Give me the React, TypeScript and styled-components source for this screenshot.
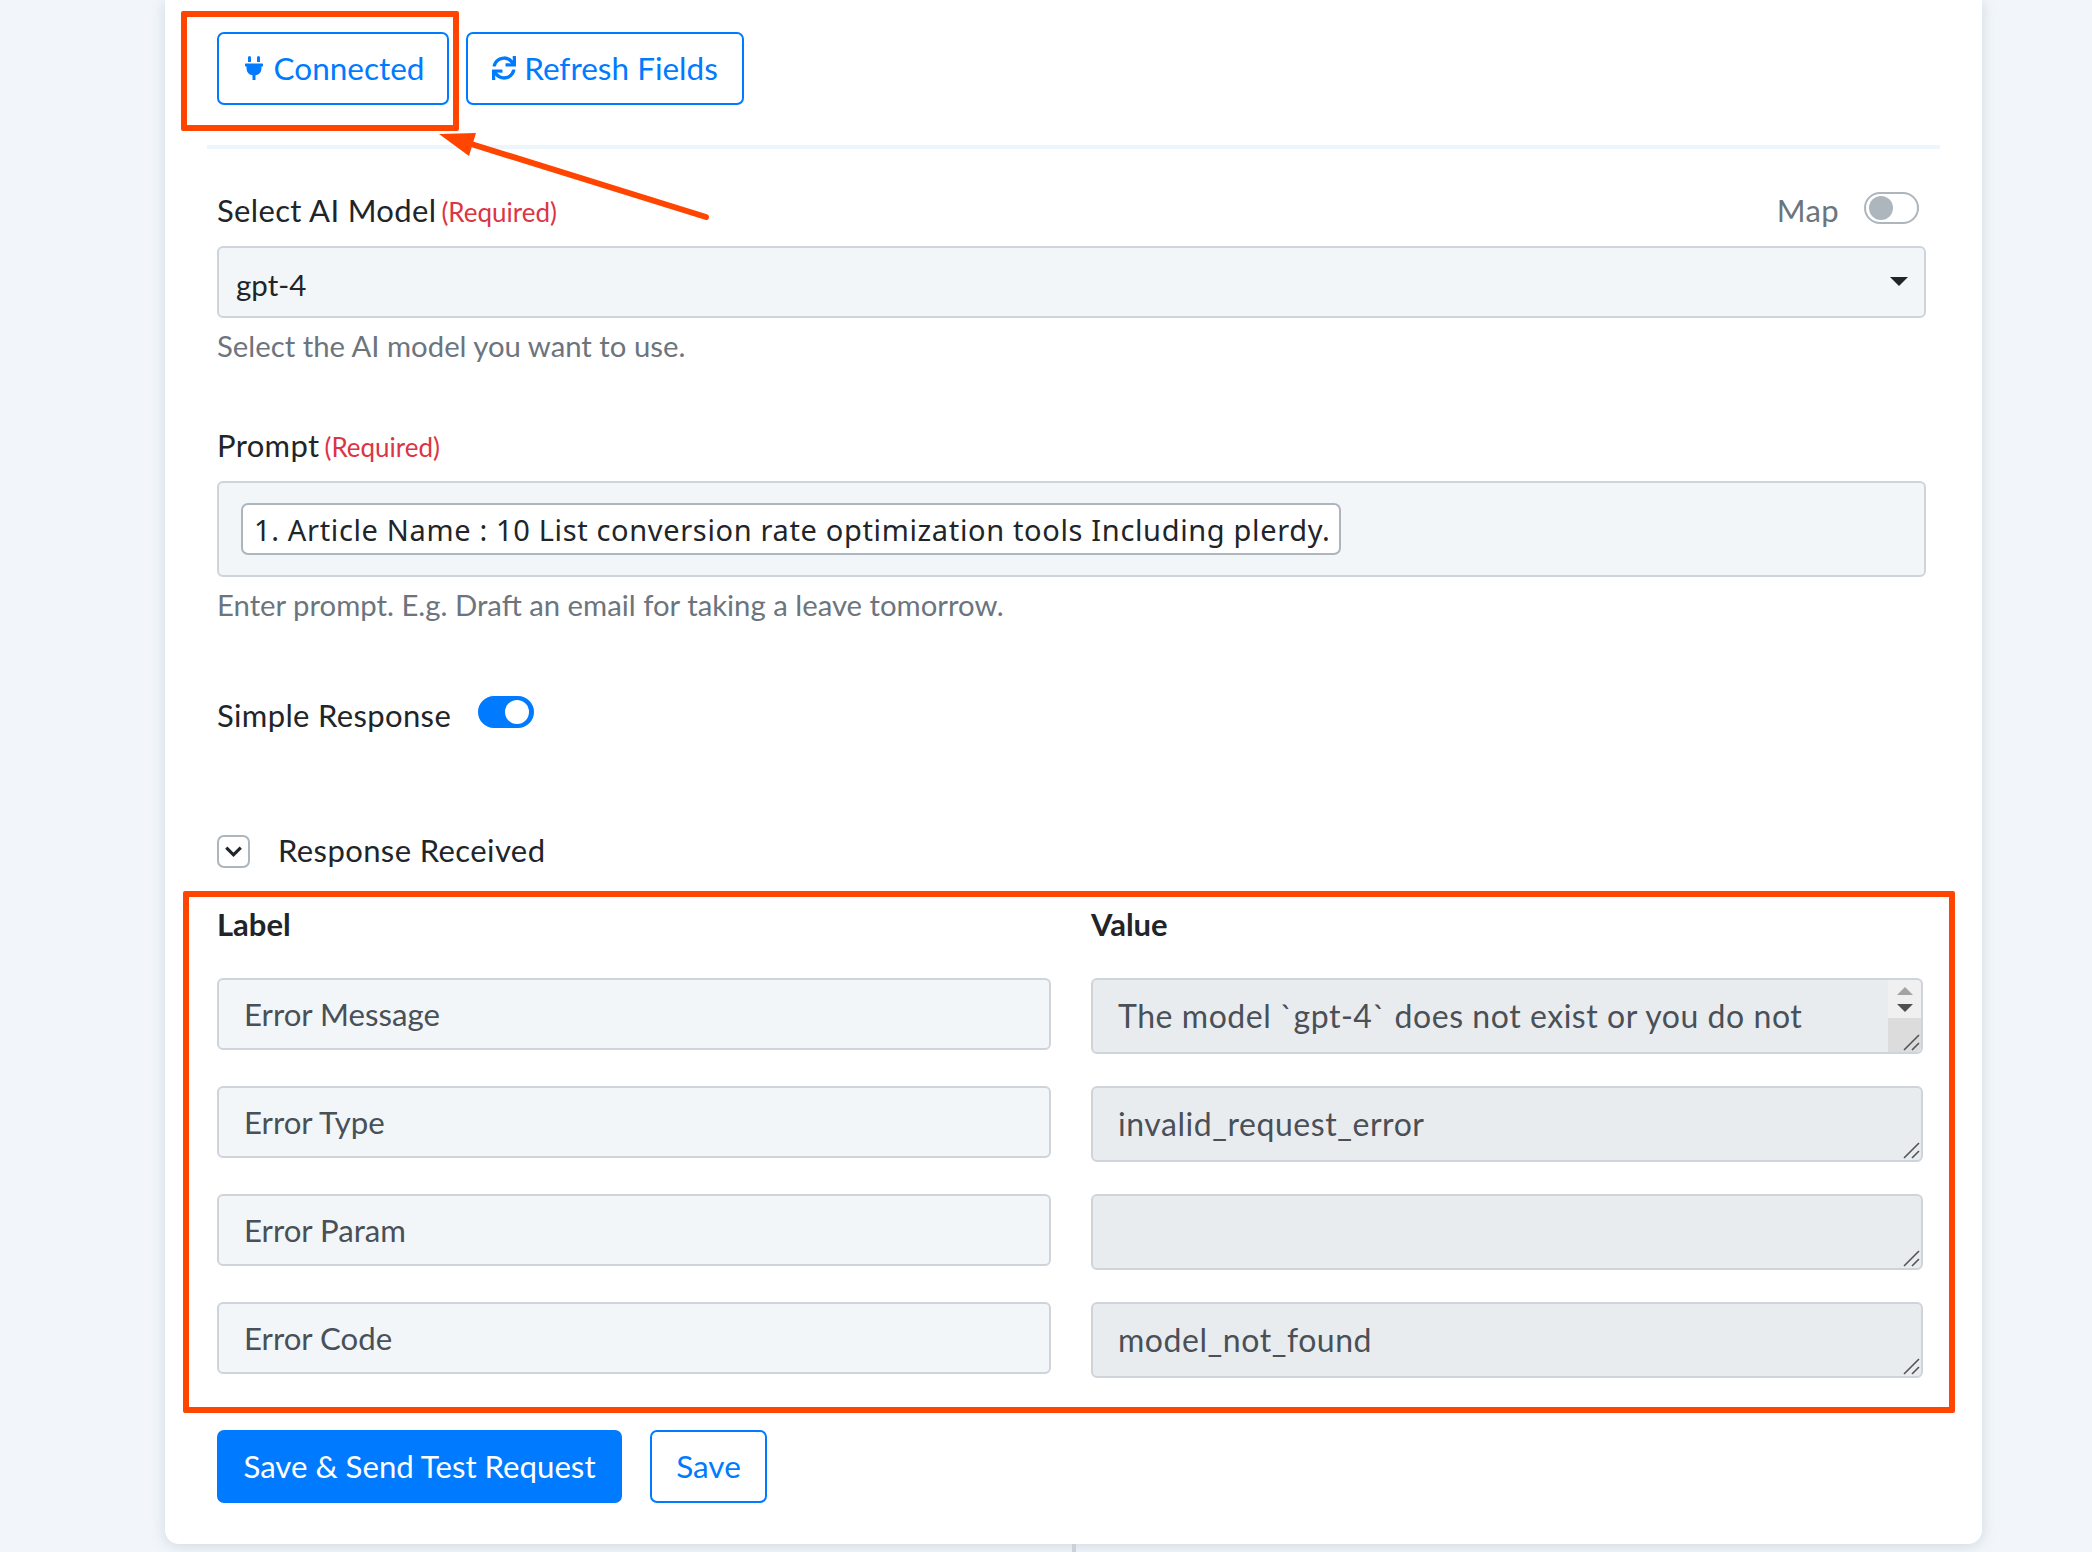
import React from 'react';
import styled, { createGlobalStyle } from 'styled-components';
import { FaPlug, FaSync } from 'react-icons/fa';

const GlobalStyle = createGlobalStyle`
  html, body {
    margin: 0;
    padding: 0;
    background: #f2f6fa;
    overflow: hidden;
  }
  * {
    box-sizing: border-box;
  }
`;

const Page = styled.div`
  position: relative;
  width: 2092px;
  height: 1552px;
  overflow: hidden;
  font-family: Lato, 'Open Sans', sans-serif;
  color: #212529;
`;

const Card = styled.main`
  margin-left: 165px;
  width: 1817px;
  height: 1544px;
  background: #fff;
  border-radius: 0 0 14px 14px;
  box-shadow: 0 2px 14px rgba(120, 140, 165, 0.28);
  padding: 32px 56px 0 52px;
`;

const Connector = styled.div`
  margin-left: 1072px;
  width: 4px;
  height: 8px;
  background: #cbd1d8;
`;

const ButtonRow = styled.div`
  display: flex;
  gap: 17px;
`;

const Button = styled.button<{ $solid?: boolean; $width: number }>`
  display: flex;
  align-items: center;
  justify-content: center;
  gap: 8px;
  width: ${(p) => p.$width}px;
  height: 73px;
  border: 2px solid #007bff;
  border-radius: 7px;
  background: ${(p) => (p.$solid ? '#007bff' : '#fff')};
  color: ${(p) => (p.$solid ? '#fff' : '#007bff')};
  font-family: inherit;
  font-size: ${(p) => (p.$solid ? 31.2 : 31.5)}px;
  padding: 0 0 2px;
`;

const Divider = styled.hr`
  margin: 40px -14px 0 -10px;
  height: 4px;
  border: 0;
  background: #edf6fd;
`;

const LabelRow = styled.div`
  display: flex;
  align-items: center;
  justify-content: space-between;
  height: 55px;
  padding-bottom: 17px;
  margin-top: 42px;
`;

const Label = styled.label`
  font-size: 31px;
  letter-spacing: 0.35px;
  color: #212529;
`;

const Required = styled.span`
  margin-left: 5px;
  font-size: 26px;
  letter-spacing: 0;
  color: #dc3545;
`;

const MapSwitch = styled.div`
  display: flex;
  align-items: center;
  gap: 25px;
  margin-right: 7px;
  font-size: 31px;
  letter-spacing: 0.4px;
  color: #6c757d;
  & > span {
    margin-top: -4px;
  }
`;

const Toggle = styled.span<{ $on?: boolean }>`
  display: flex;
  justify-content: ${(p) => (p.$on ? 'flex-end' : 'flex-start')};
  align-items: center;
  width: ${(p) => (p.$on ? 56 : 55)}px;
  height: 32px;
  padding: 0 3px;
  border-radius: 16px;
  border: 2px solid ${(p) => (p.$on ? '#007bff' : '#adb5bd')};
  background: ${(p) => (p.$on ? '#007bff' : '#fff')};
  &::after {
    content: '';
    width: 24px;
    height: 24px;
    border-radius: 50%;
    background: ${(p) => (p.$on ? '#fff' : '#adb5bd')};
  }
`;

const Select = styled.div`
  display: flex;
  align-items: center;
  justify-content: space-between;
  height: 72px;
  padding: 4px 16px 0 17px;
  background: #f2f6f9;
  border: 2px solid #ced4da;
  border-radius: 6px;
  font-size: 29.5px;
  color: #212529;
`;

const Caret = styled.span`
  width: 0;
  height: 0;
  margin-top: -5px;
  border-left: 9px solid transparent;
  border-right: 9px solid transparent;
  border-top: 9px solid #212529;
`;

const Help = styled.div`
  margin-top: 10px;
  font-size: 29.3px;
  line-height: 36px;
  color: #6c757d;
`;

const PromptLabel = styled.div`
  margin-top: 63px;
  height: 54px;
  padding-bottom: 18px;
  display: flex;
  align-items: center;
`;

const PromptBox = styled.div`
  display: flex;
  align-items: center;
  height: 96px;
  padding: 0 22px;
  background: #f2f6f9;
  border: 2px solid #ced4da;
  border-radius: 6px;
`;

const PromptTag = styled.span`
  display: flex;
  align-items: center;
  width: 1100px;
  height: 52px;
  padding-left: 11px;
  background: #fff;
  border: 2px solid #adb5bd;
  border-radius: 7px;
  font-family: 'Noto Sans', sans-serif;
  font-size: 29px;
  letter-spacing: 0.65px;
  white-space: nowrap;
  color: #212529;
`;

const SimpleRow = styled.div`
  display: flex;
  align-items: center;
  gap: 27px;
  margin-top: 70px;
  height: 44px;
  & > span {
    margin-top: -6px;
  }
`;

const CollapseRow = styled.div`
  display: flex;
  align-items: center;
  gap: 28px;
  margin-top: 97px;
  height: 32px;
  font-size: 31px;
  letter-spacing: 0.4px;
`;

const CollapseButton = styled.span`
  display: flex;
  align-items: center;
  justify-content: center;
  width: 33px;
  height: 33px;
  margin-top: 3px;
  border: 2px solid #adb5bd;
  border-radius: 7px;
  color: #212529;
`;

const Grid = styled.div`
  display: grid;
  grid-template-columns: 834px 832px;
  column-gap: 40px;
  margin-top: 38px;
`;

const HeadCell = styled.div`
  height: 74px;
  padding-top: 2px;
  font-size: 31px;
  font-weight: 700;
  line-height: 36px;
  color: #212529;
`;

const LabelInput = styled.div`
  display: flex;
  align-items: center;
  height: 72px;
  margin-bottom: 36px;
  padding: 0 25px;
  background: #f2f6f9;
  border: 2px solid #ced4da;
  border-radius: 6px;
  font-size: 31.2px;
  color: #495057;
`;

const ValueWrap = styled.div`
  position: relative;
  height: 76px;
  margin-bottom: 32px;
`;

const ValueArea = styled.textarea<{ $narrow?: boolean }>`
  display: block;
  width: 100%;
  height: 100%;
  padding: 12px ${(p) => (p.$narrow ? 100 : 25)}px 0 25px;
  overflow: hidden;
  resize: none;
  outline: none;
  background: #e9ecef;
  border: 2px solid #ced4da;
  border-radius: 6px;
  font-family: inherit;
  font-size: 32px;
  line-height: 47.5px;
  letter-spacing: 0.55px;
  color: #495057;
`;

const Grip = styled.svg`
  position: absolute;
  right: 3px;
  bottom: 3px;
  width: 17px;
  height: 17px;
`;

const ScrollBar = styled.div`
  position: absolute;
  top: 2px;
  right: 2px;
  bottom: 2px;
  width: 33px;
  border-radius: 0 5px 5px 0;
  background: linear-gradient(#f0f0f0 0 38px, #dcdcdc 38px);
`;

const ScrollArrow = styled.span<{ $down?: boolean }>`
  position: absolute;
  left: 9px;
  top: ${(p) => (p.$down ? 24 : 7)}px;
  border-left: 8px solid transparent;
  border-right: 8px solid transparent;
  ${(p) =>
    p.$down ? 'border-top: 8px solid #505050;' : 'border-bottom: 8px solid #a3a3a3;'}
`;

const Footer = styled.div`
  display: flex;
  gap: 28px;
  margin-top: 20px;
`;

const RedBox = styled.div<{ $x: number; $y: number; $w: number; $h: number }>`
  position: absolute;
  left: ${(p) => p.$x}px;
  top: ${(p) => p.$y}px;
  width: ${(p) => p.$w}px;
  height: ${(p) => p.$h}px;
  border: 6px solid #ff4500;
  border-radius: 2px;
  pointer-events: none;
`;

const ArrowOverlay = styled.svg`
  position: absolute;
  left: 430px;
  top: 125px;
  width: 290px;
  height: 105px;
  pointer-events: none;
`;

const rows = [
  { label: 'Error Message', value: 'The model `gpt-4` does not exist or you do not have access to it.', scroll: true },
  { label: 'Error Type', value: 'invalid_request_error' },
  { label: 'Error Param', value: '' },
  { label: 'Error Code', value: 'model_not_found' },
];

const ResizeGrip = () => (
  <Grip viewBox="0 0 17 17">
    <path d="M1 16 L16 1 M9 16 L16 9" stroke="#555" strokeWidth="1.6" fill="none" />
  </Grip>
);

export default function App() {
  return (
    <Page>
      <GlobalStyle />
      <Card>
        <ButtonRow>
          <Button $width={232}>
            <FaPlug size={24} />
            Connected
          </Button>
          <Button $width={278}>
            <FaSync size={24} />
            Refresh Fields
          </Button>
        </ButtonRow>
        <Divider />

        <LabelRow>
          <Label>
            Select AI Model<Required>(Required)</Required>
          </Label>
          <MapSwitch>
            Map
            <Toggle />
          </MapSwitch>
        </LabelRow>
        <Select>
          gpt-4
          <Caret />
        </Select>
        <Help>Select the AI model you want to use.</Help>

        <PromptLabel>
          <Label>
            Prompt<Required>(Required)</Required>
          </Label>
        </PromptLabel>
        <PromptBox>
          <PromptTag>1. Article Name : 10 List conversion rate optimization tools Including plerdy.</PromptTag>
        </PromptBox>
        <Help>Enter prompt. E.g. Draft an email for taking a leave tomorrow.</Help>

        <SimpleRow>
          <Label>Simple Response</Label>
          <Toggle $on />
        </SimpleRow>

        <CollapseRow>
          <CollapseButton>
            <svg width="21" height="21" viewBox="0 0 16 16">
              <path d="M2.5 5 L8 10.5 L13.5 5" stroke="currentColor" strokeWidth="2.4" fill="none" />
            </svg>
          </CollapseButton>
          Response Received
        </CollapseRow>

        <Grid>
          <HeadCell>Label</HeadCell>
          <HeadCell>Value</HeadCell>
          {rows.map((row) => (
            <React.Fragment key={row.label}>
              <LabelInput>{row.label}</LabelInput>
              <ValueWrap>
                <ValueArea readOnly $narrow={row.scroll} value={row.value} />
                {row.scroll && (
                  <ScrollBar>
                    <ScrollArrow />
                    <ScrollArrow $down />
                  </ScrollBar>
                )}
                <ResizeGrip />
              </ValueWrap>
            </React.Fragment>
          ))}
        </Grid>

        <Footer>
          <Button $solid $width={405}>
            Save &amp; Send Test Request
          </Button>
          <Button $width={117}>Save</Button>
        </Footer>
      </Card>
      <Connector />

      <RedBox $x={181} $y={11} $w={278} $h={120} />
      <RedBox $x={183} $y={891} $w={1772} $h={522} />
      <ArrowOverlay viewBox="430 125 290 105">
        <path d="M706 217 L468 143" stroke="#ff4500" strokeWidth="6" strokeLinecap="round" fill="none" />
        <path d="M439 134 L476 133 L469 156 Z" fill="#ff4500" />
      </ArrowOverlay>
    </Page>
  );
}
